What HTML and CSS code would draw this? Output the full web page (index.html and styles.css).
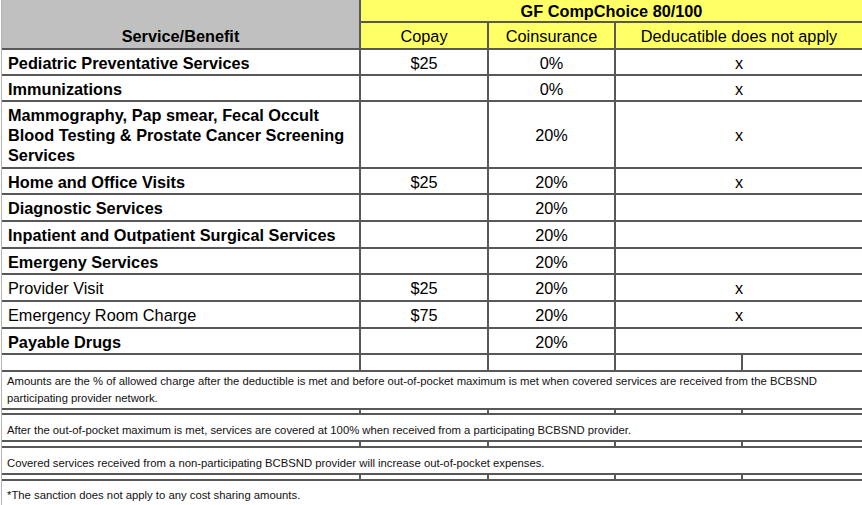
FILE: index.html
```html
<!DOCTYPE html>
<html>
<head>
<meta charset="utf-8">
<link rel="stylesheet" href="styles.css">
</head>
<body>
<div class="sheet">
  <div class="c hdr-service">Service/Benefit</div>
  <div class="c yellow b ctr span-plan last">GF CompChoice 80/100</div>
  <div class="c yellow ctr">Copay</div>
  <div class="c yellow ctr">Coinsurance</div>
  <div class="c yellow ctr span-ded last">Deducatible does not apply</div>

  <div class="c lbl b">Pediatric Preventative Services</div>
  <div class="c ctr">$25</div>
  <div class="c ctr">0%</div>
  <div class="c ctr span-ded last">x</div>

  <div class="c lbl b">Immunizations</div>
  <div class="c ctr"></div>
  <div class="c ctr">0%</div>
  <div class="c ctr span-ded last">x</div>

  <div class="c lbl b">Mammography, Pap smear, Fecal Occult Blood Testing &amp; Prostate Cancer Screening Services</div>
  <div class="c ctr"></div>
  <div class="c ctr">20%</div>
  <div class="c ctr span-ded last">x</div>

  <div class="c lbl b">Home and Office Visits</div>
  <div class="c ctr">$25</div>
  <div class="c ctr">20%</div>
  <div class="c ctr span-ded last">x</div>

  <div class="c lbl b">Diagnostic Services</div>
  <div class="c ctr"></div>
  <div class="c ctr">20%</div>
  <div class="c ctr span-ded last"></div>

  <div class="c lbl b">Inpatient and Outpatient Surgical Services</div>
  <div class="c ctr"></div>
  <div class="c ctr">20%</div>
  <div class="c ctr span-ded last"></div>

  <div class="c lbl b">Emergeny Services</div>
  <div class="c ctr"></div>
  <div class="c ctr">20%</div>
  <div class="c ctr span-ded last"></div>

  <div class="c lbl">Provider Visit</div>
  <div class="c ctr">$25</div>
  <div class="c ctr">20%</div>
  <div class="c ctr span-ded last">x</div>

  <div class="c lbl">Emergency Room Charge</div>
  <div class="c ctr">$75</div>
  <div class="c ctr">20%</div>
  <div class="c ctr span-ded last">x</div>

  <div class="c lbl b">Payable Drugs</div>
  <div class="c ctr"></div>
  <div class="c ctr">20%</div>
  <div class="c ctr span-ded last"></div>

  <div class="c"></div><div class="c"></div><div class="c"></div><div class="c"></div><div class="c last"></div>

  <div class="c note full">Amounts are the % of allowed charge after the deductible is met and before out-of-pocket maximum is met when covered services are received from the BCBSND participating provider network.</div>

  <div class="c"></div><div class="c"></div><div class="c"></div><div class="c"></div><div class="c last"></div>

  <div class="c note full">After the out-of-pocket maximum is met, services are covered at 100% when received from a participating BCBSND provider.</div>

  <div class="c"></div><div class="c"></div><div class="c"></div><div class="c"></div><div class="c last"></div>

  <div class="c note full">Covered services received from a non-participating BCBSND provider will increase out-of-pocket expenses.</div>

  <div class="c"></div><div class="c"></div><div class="c"></div><div class="c"></div><div class="c last"></div>

  <div class="c note full final">*The sanction does not apply to any cost sharing amounts.</div>
</div>
</body>
</html>
```
FILE: styles.css
```css
html, body {
  margin: 0;
  padding: 0;
  background: #ffffff;
}

body {
  font-family: "Liberation Sans", Arial, sans-serif;
  color: #000;
  overflow: hidden;
}

.sheet {
  margin-left: 1px;
  border-left: 1px solid #b4b4b4;
  display: grid;
  grid-template-columns: 359px 128px 127px 127px 119px;
  grid-template-rows: 23px 27px 26px 26px 67px 26px 27px 27px 26px 27px 27px 26px 17px 38px 5px 27px 6px 27px 6px 24px;
}

.c {
  box-sizing: border-box;
  border-right: 2px solid #585858;
  border-bottom: 2px solid #585858;
  font-size: 16.3px;
  line-height: 20px;
  display: flex;
  align-items: center;
  padding-top: 1px;
  min-width: 0;
}

.c.last {
  border-right: none;
}

.ctr {
  justify-content: center;
  text-align: center;
}

.b {
  font-weight: bold;
}

.lbl {
  padding-left: 6px;
  padding-right: 4px;
}

.yellow {
  background: #ffff66;
}

.hdr-service {
  grid-row: 1 / 3;
  background: #c0c0c0;
  font-weight: bold;
  justify-content: center;
  align-items: flex-end;
  padding-bottom: 2px;
}

.span-plan {
  grid-column: 2 / 6;
  padding-top: 0;
}

.span-ded {
  grid-column: 4 / 6;
}

.full {
  grid-column: 1 / 6;
  border-right: none;
}

.note {
  font-size: 11.3px;
  line-height: 17px;
  color: #111;
  padding: 0 4px 1px 5px;
  align-items: flex-end;
}

.final {
  border-bottom: none;
  padding-bottom: 1px;
}
```
